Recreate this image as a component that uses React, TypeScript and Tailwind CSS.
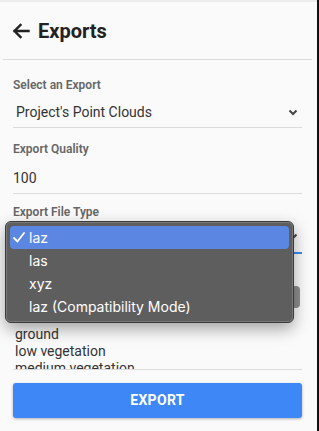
import React from "react";

export default function App() {
  const items = ["laz", "las", "xyz", "laz (Compatibility Mode)"];
  return (
    <div className="relative w-[319px] h-[431px] overflow-hidden bg-[#fafafa] flex" style={{ fontFamily: "Roboto, 'Liberation Sans', sans-serif" }}>
      <div className="flex-1 flex flex-col">
        <div className="h-[2px] bg-[#ececec]" />
        <div className="ml-[3px] w-[309px] flex flex-col">
          {/* Header */}
          <div className="h-[58px] flex items-center pl-[9px] gap-[8px] border-b border-[#dcdcdc]">
            <svg width="18" height="16" viewBox="0 0 18 16" className="mt-[1px]">
              <path d="M16.5 8H2.5M8.5 2L2.5 8L8.5 14" fill="none" stroke="#222" strokeWidth="2.4" strokeLinecap="square" />
            </svg>
            <span className="text-[20px] font-bold text-[#222] leading-none">Exports</span>
          </div>
          <div className="px-[10px] flex flex-col">
            {/* Select an export */}
            <div className="mt-[17px] text-[12px] leading-[16px] font-semibold text-[#666]">Select an Export</div>
            <div className="pt-[9px] pb-[5px] border-b border-[#dcdcdc] flex items-center justify-between pl-[3px] pr-[4px]">
              <span className="text-[14px] leading-[20px] text-[#333]">Project's Point Clouds</span>
              <svg width="10" height="7" viewBox="0 0 10 7">
                <path d="M1.5 1.5L5 5L8.5 1.5" fill="none" stroke="#444" strokeWidth="2" />
              </svg>
            </div>
            {/* Export quality */}
            <div className="mt-[13px] text-[12px] leading-[16px] font-semibold text-[#666]">Export Quality</div>
            <div className="pt-[9px] pb-[3px] border-b border-[#dcdcdc]">
              <span className="text-[14px] leading-[20px] text-[#333]">100</span>
            </div>
            {/* File type */}
            <div className="mt-[10px] text-[12px] leading-[16px] font-semibold text-[#666]">Export File Type</div>
            <div className="h-[34px] border-b-2 border-[#3b8cf0] flex items-center justify-between pl-[3px] pr-[4px]">
              <span className="text-[14px] leading-[20px] text-[#333]">laz</span>
              <svg width="10" height="7" viewBox="0 0 10 7">
                <path d="M1.5 1.5L5 5L8.5 1.5" fill="none" stroke="#444" strokeWidth="2" />
              </svg>
            </div>
            {/* classes */}
            <div className="mt-[32px] flex justify-end pr-[2px]">
              <div className="w-[24px] h-[22px] rounded-[4px] bg-[#8e8e8e]" />
            </div>
            <div className="mt-[18px] h-[44px] overflow-hidden border-b border-[#dcdcdc] pl-[2px]">
              <div className="text-[14px] leading-[17px] text-[#333]">ground</div>
              <div className="text-[14px] leading-[17px] text-[#333]">low vegetation</div>
              <div className="text-[14px] leading-[17px] text-[#333]">medium vegetation</div>
            </div>
            <button className="mt-[13px] h-[35px] rounded-[3px] bg-[#3d87f6] text-white text-[14px] font-bold tracking-[0.3px] shadow-[0_1px_3px_rgba(0,0,0,0.3)]">
              EXPORT
            </button>
          </div>
        </div>
      </div>
      <div className="w-[2px] bg-[#111]" />

      {/* Dropdown popup */}
      <div
        className="absolute left-[5px] top-[221px] w-[289px] h-[102px] rounded-[6px] bg-[#5f5e5f] border border-[#3a3a3a] shadow-[0_6px_16px_rgba(0,0,0,0.35)] p-[4px]"
        style={{ fontFamily: "Inter, 'Liberation Sans', sans-serif" }}
      >
        <div className="absolute inset-0 rounded-[5px] ring-1 ring-inset ring-[#7a797a] pointer-events-none" />
        {items.map((it, i) => (
          <div
            key={it}
            className={`relative h-[23px] flex items-center rounded-[4px] text-[14px] text-white ${i === 0 ? "bg-[#5b87e3]" : ""}`}
          >
            <span className="w-[19px] pl-[3px] flex items-center">
              {i === 0 ? (
                <svg width="12" height="11" viewBox="0 0 12 11">
                  <path d="M1 6L4.5 9.5L11 1" fill="none" stroke="#fff" strokeWidth="1.8" strokeLinecap="round" strokeLinejoin="round" />
                </svg>
              ) : null}
            </span>
            <span>{it}</span>
          </div>
        ))}
      </div>
    </div>
  );
}
